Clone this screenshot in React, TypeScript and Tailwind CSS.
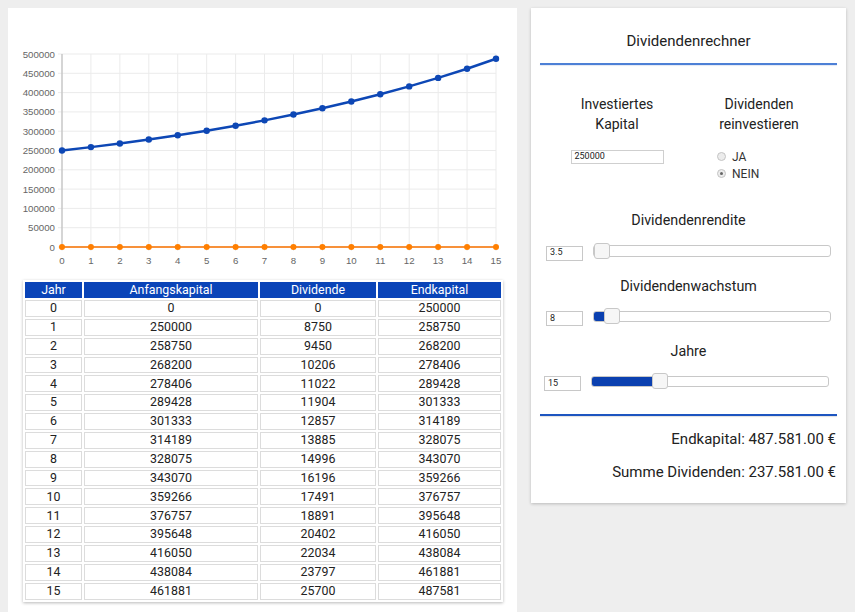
import React from "react";

const endkapital = [
  250000, 258750, 268200, 278406, 289428, 301333, 314189, 328075, 343070, 359266, 376757, 395648, 416050, 438084, 461881,
  487581,
];
const anfang = [0, 250000, 258750, 268200, 278406, 289428, 301333, 314189, 328075, 343070, 359266, 376757, 395648, 416050, 438084, 461881];
const dividende = [0, 8750, 9450, 10206, 11022, 11904, 12857, 13885, 14996, 16196, 17491, 18891, 20402, 22034, 23797, 25700];

// plot area inside the chart svg
const X0 = 54;
const X1 = 488;
const YT = 46;
const YB = 239;
const xAt = (i: number) => X0 + ((X1 - X0) / 15) * i;
const yAt = (v: number) => YB - (v / 500000) * (YB - YT);

function Chart() {
  const ticks = Array.from({ length: 11 }, (_, i) => i * 50000);
  const years = Array.from({ length: 16 }, (_, i) => i);
  const bluePts = endkapital.map((v, i) => `${xAt(i)},${yAt(v)}`).join(" ");
  const orangePts = years.map((i) => `${xAt(i)},${YB}`).join(" ");

  return (
    <svg width={509} height={264} className="block" style={{ fontFamily: "'Liberation Sans', Arial, sans-serif" }}>
      {ticks.map((t) => (
        <g key={t}>
          <line x1={X0 - 4} x2={X1} y1={yAt(t)} y2={yAt(t)} stroke="#ebebeb" strokeWidth={1} />
          <text x={X0 - 7} y={yAt(t) + 3.5} textAnchor="end" fontSize={9.7} fill="#666">
            {t}
          </text>
        </g>
      ))}
      {years.map((i) => (
        <g key={i}>
          <line x1={xAt(i)} x2={xAt(i)} y1={YT} y2={YB + 4} stroke="#ebebeb" strokeWidth={1} />
          <text x={xAt(i)} y={255.5} textAnchor="middle" fontSize={9.7} fill="#666">
            {i}
          </text>
        </g>
      ))}
      <line x1={X0} x2={X0} y1={YT} y2={YB} stroke="#b5b5b5" strokeWidth={1} />
      <polyline points={orangePts} fill="none" stroke="#f7913a" strokeWidth={2} />
      {years.map((i) => (
        <circle key={i} cx={xAt(i)} cy={YB} r={3} fill="#ff7f00" />
      ))}
      <polyline points={bluePts} fill="none" stroke="#0d47b5" strokeWidth={2.5} />
      {endkapital.map((v, i) => (
        <circle key={i} cx={xAt(i)} cy={yAt(v)} r={3.2} fill="#0d47b5" />
      ))}
    </svg>
  );
}

function Table() {
  return (
    <table
      className="ml-[15px] mt-2 w-[480px] table-fixed border-separate border-spacing-[2px] text-center text-[12.4px] leading-none text-[#222] shadow-[0_1px_3px_rgba(0,0,0,0.28)]"
      style={{ fontFamily: "Roboto, 'Liberation Sans', sans-serif" }}
    >
      <colgroup>
        <col className="w-[57px]" />
        <col className="w-[174px]" />
        <col className="w-[116px]" />
        <col className="w-[123px]" />
      </colgroup>
      <thead>
        <tr>
          {["Jahr", "Anfangskapital", "Dividende", "Endkapital"].map((h) => (
            <th key={h} className="h-[16px] bg-[#0a44b8] p-0 font-normal text-white">
              {h}
            </th>
          ))}
        </tr>
      </thead>
      <tbody>
        {anfang.map((a, i) => (
          <tr key={i}>
            <td className="h-[16.85px] border border-[#dcdcdc] p-0">{i}</td>
            <td className="h-[16.85px] border border-[#dcdcdc] p-0">{a}</td>
            <td className="h-[16.85px] border border-[#dcdcdc] p-0">{dividende[i]}</td>
            <td className="h-[16.85px] border border-[#dcdcdc] p-0">{endkapital[i]}</td>
          </tr>
        ))}
      </tbody>
    </table>
  );
}

function Radio({ checked, label }: { checked?: boolean; label: string }) {
  return (
    <div className="flex h-[17px] items-center">
      <span className="flex h-[9px] w-[9px] items-center justify-center rounded-full border border-[#c4c4c4] bg-[#ececec]">
        {checked && <span className="h-[3px] w-[3px] rounded-full bg-[#666]" />}
      </span>
      <span className="ml-[6px] text-[12px] text-[#333]">{label}</span>
    </div>
  );
}

function SliderRow({
  label,
  value,
  fill,
  mt,
  shift,
}: {
  label: string;
  value: string;
  fill: number;
  mt: string;
  shift?: boolean;
}) {
  return (
    <div className={mt}>
      <div className="h-[20px] text-center text-[14.3px] leading-[20px] text-[#222]">{label}</div>
      <div className={`mt-[12.5px] flex h-[16px] items-start ${shift ? "ml-[13px]" : "ml-[15px]"}`}>
        <div className="mt-[3px] flex h-[15px] w-[37px] shrink-0 items-center border border-[#c8c8c8] bg-white px-[3px] text-[9px] text-[#222]">
          {value}
        </div>
        <div className="relative ml-[10px] h-[16px] w-[238px]">
          <div className="absolute left-0 right-0 top-[2.5px] h-[11.5px] overflow-hidden rounded-[3px] border border-[#c8c8c8] bg-white">
            <div className="h-full bg-[#0b40b0]" style={{ width: fill }} />
          </div>
          <div
            className="absolute top-0 h-[16px] w-[16px] rounded-[3px] border border-[#c8c8c8] bg-[#f6f6f6]"
            style={{ left: fill - 1 }}
          />
        </div>
      </div>
    </div>
  );
}

export default function App() {
  return (
    <div className="flex min-h-screen items-start gap-[14px] bg-[#eeeeee] p-2">
      <div className="h-[620px] w-[509px] shrink-0 bg-white">
        <Chart />
        <Table />
      </div>

      <div
        className="h-[495px] w-[315px] shrink-0 bg-white text-[#222] shadow-[0_1px_3px_rgba(0,0,0,0.22)]"
        style={{ fontFamily: "Roboto, 'Liberation Sans', sans-serif" }}
      >
        <div className="pt-[23px] text-center text-[15px] leading-[20px]">Dividendenrechner</div>
        <div className="mx-[9px] mt-[12px] h-[1.5px] bg-[#4d80d6] shadow-[0_1px_1px_rgba(60,100,180,0.15)]" />

        <div className="mt-[29.5px] flex">
          <div className="flex w-[172px] flex-col items-center">
            <div className="text-center text-[14px] leading-[20px]">
              Investiertes
              <br />
              Kapital
            </div>
            <div className="mt-[16px] flex h-[14px] w-[93px] items-center border border-[#cfcfcf] bg-white px-[3px] text-[9px]">
              250000
            </div>
          </div>
          <div className="flex w-[112px] flex-col">
            <div className="text-center text-[14px] leading-[20px]">
              Dividenden
              <br />
              reinvestieren
            </div>
            <div className="ml-[14px] mt-[14px]">
              <Radio label="JA" />
              <Radio label="NEIN" checked />
            </div>
          </div>
        </div>

        <SliderRow label="Dividendenrendite" value="3.5" fill={2} mt="mt-[28px]" />
        <SliderRow label="Dividendenwachstum" value="8" fill={12} mt="mt-[17px]" />
        <SliderRow label="Jahre" value="15" fill={62} mt="mt-[16.5px]" shift />

        <div className="mx-[9px] mt-[24.5px] h-[2px] bg-[#1d55c0] shadow-[0_1px_1px_rgba(0,0,0,0.12)]" />
        <div className="mr-[10px] mt-[13px] text-right text-[15px] leading-[20px]">Endkapital: 487.581.00 €</div>
        <div className="mr-[10px] mt-[13.5px] text-right text-[15px] leading-[20px]">Summe Dividenden: 237.581.00 €</div>
      </div>
    </div>
  );
}
